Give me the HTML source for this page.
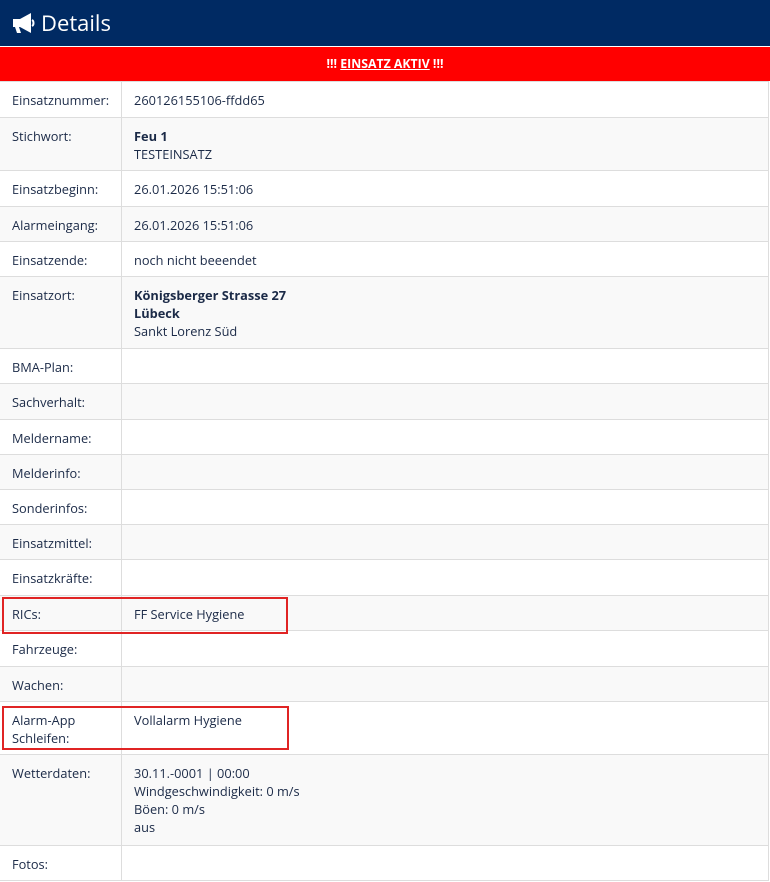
<!DOCTYPE html>
<html><head><meta charset="utf-8"><style>
*{margin:0;padding:0;box-sizing:border-box}
body{width:770px;height:882px;background:#fff;font-family:"Open Sans","Liberation Sans","DejaVu Sans",sans-serif;font-size:12.8px;color:#1b2a47;position:relative;overflow:hidden}
.hdr{position:absolute;left:0;top:0;width:770px;height:46px;background:#002a63;color:#fff;font-size:22px;line-height:46px;padding-left:41px}
.hdr svg{position:absolute;left:12px;top:12px}
.red{position:absolute;left:0;top:47px;width:770px;height:34px;background:#f00;color:#fff;font-weight:bold;font-size:12.3px;text-align:center;line-height:34px}
.red u{text-decoration:underline}
.tbl{position:absolute;left:0;top:81px;width:769px;border-right:1px solid #ddd;border-bottom:1px solid #ddd}
.r{display:flex;border-top:1px solid #ddd;line-height:18px}
.r:nth-child(even){background:#f9f9f9}
.l{width:122px;border-right:1px solid #ddd;padding:9px 0 0 12px;flex:none}
.v{padding:9px 0 0 12px}
b{font-weight:bold}
.box{position:absolute;border:2px solid #e02424}
</style></head><body>
<div class="hdr"><svg width="24" height="22" viewBox="0 0 24 22"><path d="M1 7h7l11-6v20l-11-6h-1l2 6h-4l-2-6H1z" fill="#fff"/><path d="M20 8c2 1 2 5 0 6" stroke="#fff" stroke-width="2" fill="none"/></svg>Details</div>
<div class="red">!!! <u>EINSATZ AKTIV</u> !!!</div>
<div class="tbl">
<div class="r" style="height:36px"><div class="l">Einsatznummer:</div><div class="v">260126155106-ffdd65</div></div>
<div class="r" style="height:53px"><div class="l">Stichwort:</div><div class="v"><b>Feu 1</b><br>TESTEINSATZ</div></div>
<div class="r" style="height:36px"><div class="l">Einsatzbeginn:</div><div class="v">26.01.2026 15:51:06</div></div>
<div class="r" style="height:35px"><div class="l">Alarmeingang:</div><div class="v">26.01.2026 15:51:06</div></div>
<div class="r" style="height:35px"><div class="l">Einsatzende:</div><div class="v">noch nicht beeendet</div></div>
<div class="r" style="height:72px"><div class="l">Einsatzort:</div><div class="v"><b>Königsberger Strasse 27</b><br><b>Lübeck</b><br>Sankt Lorenz Süd</div></div>
<div class="r" style="height:35px"><div class="l">BMA-Plan:</div><div class="v"></div></div>
<div class="r" style="height:36px"><div class="l">Sachverhalt:</div><div class="v"></div></div>
<div class="r" style="height:35px"><div class="l">Meldername:</div><div class="v"></div></div>
<div class="r" style="height:35px"><div class="l">Melderinfo:</div><div class="v"></div></div>
<div class="r" style="height:35px"><div class="l">Sonderinfos:</div><div class="v"></div></div>
<div class="r" style="height:35px"><div class="l">Einsatzmittel:</div><div class="v"></div></div>
<div class="r" style="height:36px"><div class="l">Einsatzkräfte:</div><div class="v"></div></div>
<div class="r" style="height:35px"><div class="l">RICs:</div><div class="v">FF Service Hygiene</div></div>
<div class="r" style="height:36px"><div class="l">Fahrzeuge:</div><div class="v"></div></div>
<div class="r" style="height:35px"><div class="l">Wachen:</div><div class="v"></div></div>
<div class="r" style="height:53px"><div class="l">Alarm-App<br>Schleifen:</div><div class="v">Vollalarm Hygiene</div></div>
<div class="r" style="height:91px"><div class="l">Wetterdaten:</div><div class="v">30.11.-0001 | 00:00<br>Windgeschwindigkeit: 0 m/s<br>Böen: 0 m/s<br>aus</div></div>
<div class="r" style="height:35px"><div class="l">Fotos:</div><div class="v"></div></div>
</div>
<div class="box" style="left:2px;top:597px;width:286px;height:37px"></div>
<div class="box" style="left:2px;top:706px;width:287px;height:44px"></div>
</body></html>
